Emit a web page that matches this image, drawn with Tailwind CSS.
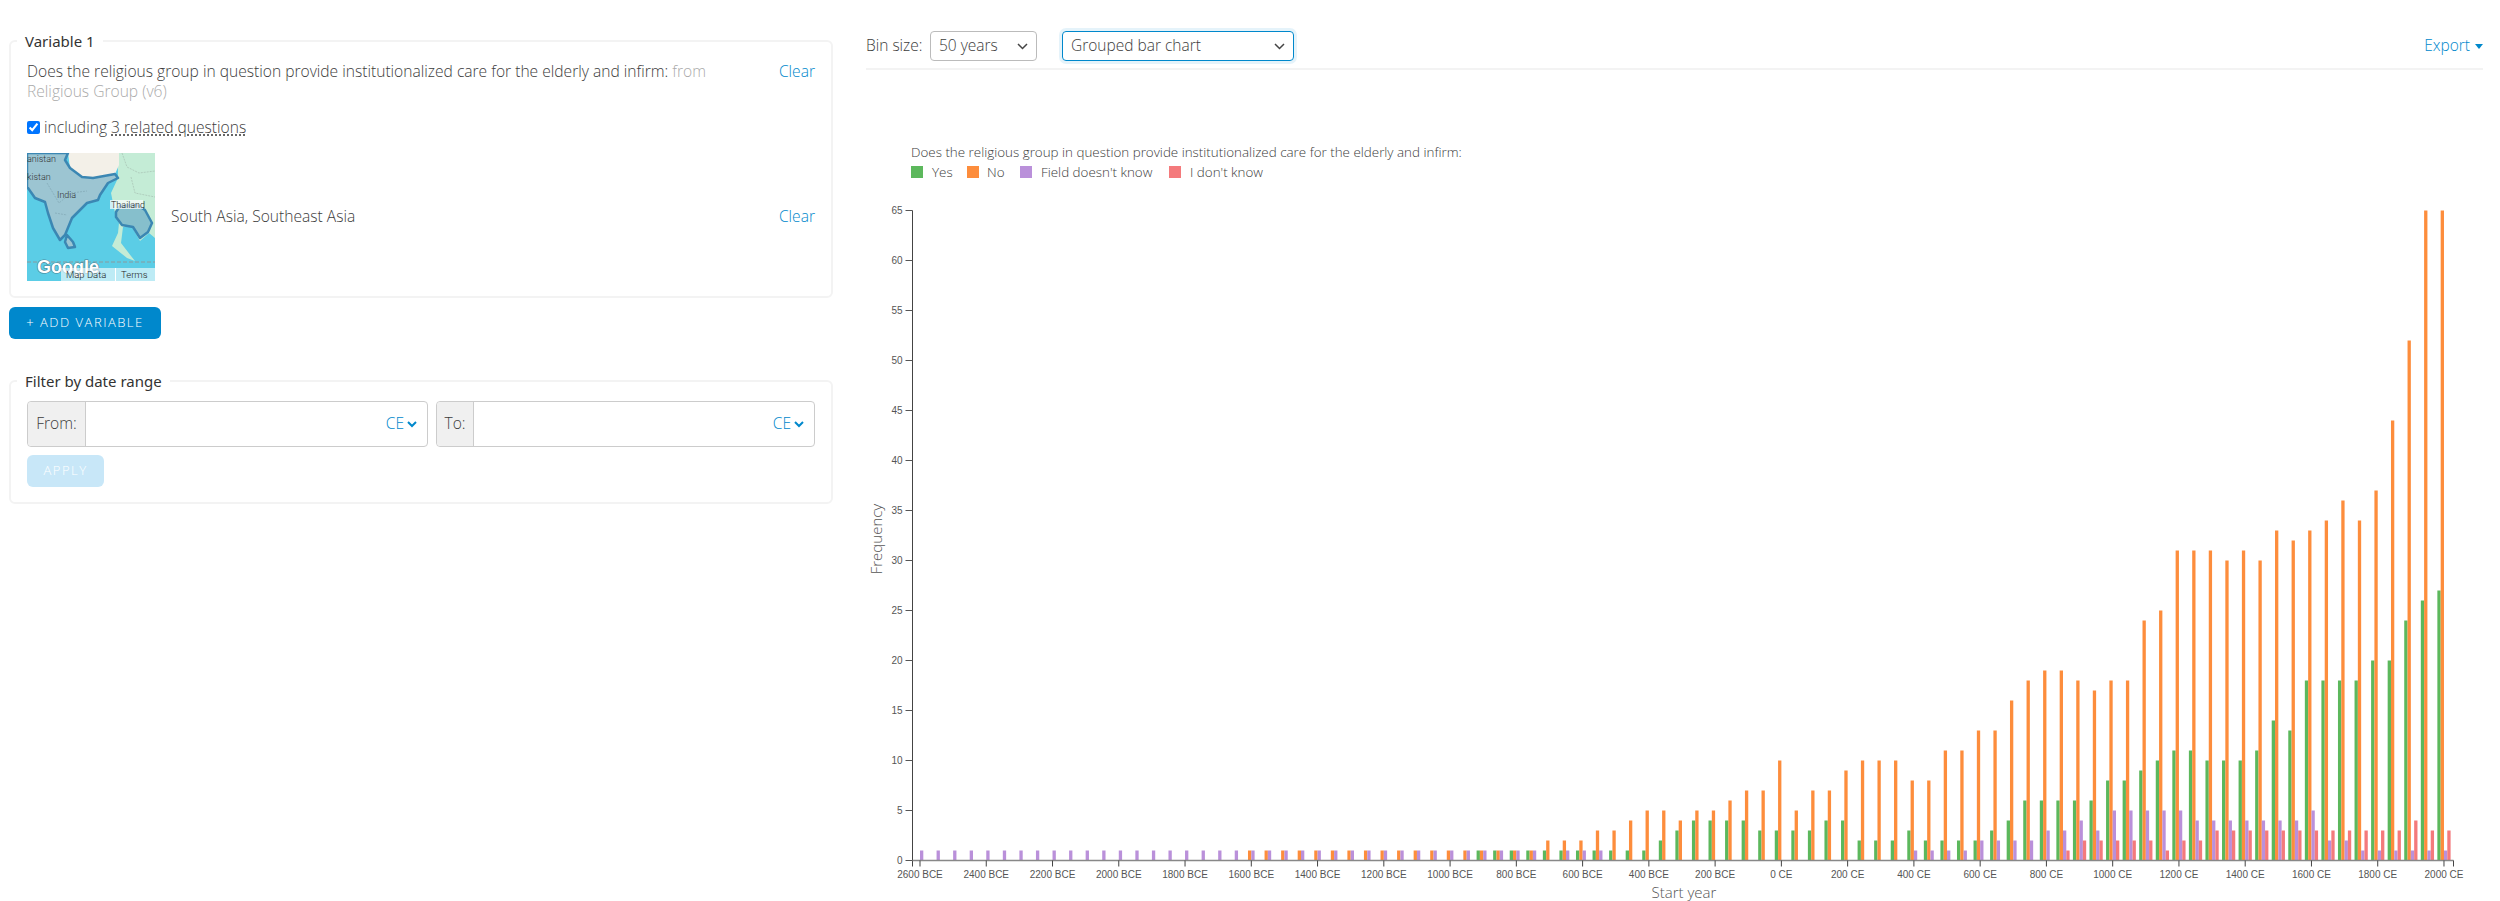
<!DOCTYPE html>
<html lang="en">
<head>
    <meta charset="UTF-8">
    <title>Religious Group chart</title>
    <script src="https://cdn.jsdelivr.net/npm/@tailwindcss/browser@4"></script>
</head>
<body class="bg-white font-['Open_Sans',sans-serif] font-light text-[#3c3c3c] overflow-hidden">
<div class="flex h-[901px]">

    <!-- Left column: variables and date filter -->
    <div class="w-[824px] ml-[9px] shrink-0 pt-[31px]">
        <fieldset class="border-2 border-[#f3f3f3] rounded-md px-[16px] h-[267px]">
            <legend class="-ml-[10px] px-2 font-['Noto_Sans',sans-serif] text-[15px] font-normal leading-5 text-[#333]">Variable 1</legend>
            <div class="flex justify-between pt-[10px] text-[15.6px] leading-5">
                <p class="w-[720px]">Does the religious group in question provide institutionalized care for the elderly and infirm: <span class="text-[#aaa]">from Religious Group (v6)</span></p>
                <a class="text-[#0088cc]">Clear</a>
            </div>
            <label class="flex items-center gap-[4px] mt-[16px] text-[15.6px] leading-5">
                <input type="checkbox" checked class="w-[13px] h-[13px] m-0">
                <span>including <span class="underline decoration-dotted underline-offset-2">3 related questions</span></span>
            </label>
            <div class="flex items-center justify-between mt-[16px] text-[15.6px]">
                <div class="flex items-center gap-4">
                    <svg width="128" height="128" viewBox="0 0 128 128" class="block" font-family="Roboto, sans-serif">
                        <rect width="128" height="128" fill="#5bcde6"/>
                        <!-- land -->
                        <path d="M91 25 84 40 88 60 92 70 91 80 85 93 100 105 108 108 104 103 94 90 96 74 104 72 113 88 122 80 128 85V0H91Z" fill="#c4ecd6"/>
                        <path d="M41 0 43 15 55 24 66 25 88 21 92 12 92 0Z" fill="#f3f0e8"/>
                        <path d="M95 0 100 14 112 20 128 18M104 24 108 40 128 44" fill="none" stroke="#8f9f98" stroke-width=".4" stroke-dasharray="2 1"/>
                        <!-- selected regions -->
                        <path d="M41 0 38 7 43 15 55 24 66 25 88 21 91 25 81 30 73 42 71 47 60 50 53 57 45 65 38 82 33 87 26 75 21 60 18 49 8 45 1 35H0V0Z" fill="#9cc5d2" stroke="#3b87b3" stroke-width="2.5" stroke-linejoin="round"/>
                        <path d="M40 82 46 89 48 94 41 95 38 89Z" fill="#9cc5d2" stroke="#3b87b3" stroke-width="2.5" stroke-linejoin="round"/>
                        <path d="M89 59 93 53 110 52 118 57 125 70 121 79 113 85 106 74 95 72 89 64Z" fill="#86bfcc" stroke="#3b87b3" stroke-width="2.5" stroke-linejoin="round"/>
                        <path d="M20 30 32 50 44 40 60 38M28 60 40 62" fill="none" stroke="#6d8f9c" stroke-width=".4" stroke-dasharray="2 1"/>
                        <path d="M0 109H128" stroke="#8a9a9e" stroke-width="1" stroke-dasharray="4 2"/>
                        <text x="30" y="45" font-size="9" fill="#333">India</text>
                        <text x="0" y="27" font-size="9" fill="#333">kistan</text>
                        <text x="0" y="9" font-size="9" fill="#333">anistan</text>
                        <rect x="83" y="47" width="33" height="9" fill="#fff" fill-opacity=".7"/>
                        <text x="84" y="55" font-size="9" fill="#111">Thailand</text>
                        <text x="10" y="120" font-size="18" font-weight="700" fill="#fff" stroke="#4a7f90" stroke-width="1.2" paint-order="stroke" font-family="Liberation Sans, sans-serif">Google</text>
                        <rect x="34" y="115" width="94" height="13" fill="#fff" fill-opacity=".6"/>
                        <path d="M88.5 115V128" stroke="#fff"/>
                        <text x="39" y="125" font-size="9.5" fill="#222">Map Data</text>
                        <text x="94" y="125" font-size="9.5" fill="#222">Terms</text>
                    </svg>
                    <span>South Asia, Southeast Asia</span>
                </div>
                <a class="text-[#0088cc]">Clear</a>
            </div>
        </fieldset>

        <button class="block mt-[9px] w-[152px] h-[32px] rounded-md bg-[#0088cc] text-white text-[13px] tracking-[1.5px]">+ ADD VARIABLE</button>

        <fieldset class="mt-[32px] border-2 border-[#f3f3f3] rounded-md px-[16px] h-[133px]">
            <legend class="-ml-[10px] px-2 font-['Noto_Sans',sans-serif] text-[15px] font-normal leading-5 text-[#333]">Filter by date range</legend>
            <div class="flex gap-[8px] mt-[10px] text-[15.6px]">
                <div class="flex w-[401px] h-[46px] border border-[#ccc] rounded">
                    <span class="flex items-center justify-center w-[58px] bg-[#f0f0f0] border-r border-[#ccc] rounded-l">From:</span>
                    <div class="flex-1 flex items-center justify-end gap-[3px] pr-[10px] text-[#0088cc]">CE
                        <svg width="10" height="7" viewBox="0 0 10 7" fill="none" stroke="#0088cc" stroke-width="2"><path d="M1 1l4 4 4-4"/></svg>
                    </div>
                </div>
                <div class="flex flex-1 h-[46px] border border-[#ccc] rounded">
                    <span class="flex items-center justify-center w-[37px] bg-[#f0f0f0] border-r border-[#ccc] rounded-l">To:</span>
                    <div class="flex-1 flex items-center justify-end gap-[3px] pr-[10px] text-[#0088cc]">CE
                        <svg width="10" height="7" viewBox="0 0 10 7" fill="none" stroke="#0088cc" stroke-width="2"><path d="M1 1l4 4 4-4"/></svg>
                    </div>
                </div>
            </div>
            <button class="block mt-[8px] w-[77px] h-[32px] rounded-md bg-[#c8e7f8] text-white text-[13px] tracking-[1.5px]">APPLY</button>
        </fieldset>
    </div>

    <!-- Right column: chart -->
    <div class="w-[1617px] ml-[33px] shrink-0">
        <div class="flex items-center h-[70px] pt-[24px] border-b-2 border-[#f3f3f3] text-[15.5px]">
            <span class="w-[64px]">Bin size:</span>
            <div class="flex items-center justify-between w-[107px] h-[30px] px-2 border border-[#bbb] rounded">
                <span>50 years</span>
                <svg width="11" height="7" viewBox="0 0 11 7" fill="none" stroke="#444" stroke-width="1.5"><path d="M1 1l4.5 4.5L10 1"/></svg>
            </div>
            <div class="flex items-center justify-between w-[232px] h-[30px] ml-[25px] px-2 border border-[#0088cc] rounded ring-[3px] ring-[#0088cc]/10">
                <span>Grouped bar chart</span>
                <svg width="11" height="7" viewBox="0 0 11 7" fill="none" stroke="#444" stroke-width="1.5"><path d="M1 1l4.5 4.5L10 1"/></svg>
            </div>
            <div class="ml-auto flex items-center gap-[5px] text-[#0088cc]">
                <span>Export</span>
                <svg width="8" height="5" viewBox="0 0 8 5" fill="#0088cc"><path d="M0 0H8L4 5Z"/></svg>
            </div>
        </div>

        <div class="ml-[45px] mt-[72px] text-[13.4px] leading-5">
            <div class="h-[20px]">Does the religious group in question provide institutionalized care for the elderly and infirm:</div>
            <div class="flex items-center h-[20px]">
                <div class="flex items-center gap-[9px] w-[56px]"><span class="w-3 h-3 bg-[#5cb85c]"></span><span>Yes</span></div>
                <div class="flex items-center gap-2 w-[53px]"><span class="w-3 h-3 bg-[#fd8d3c]"></span><span>No</span></div>
                <div class="flex items-center gap-[9px] w-[149px]"><span class="w-3 h-3 bg-[#ba90da]"></span><span>Field doesn't know</span></div>
                <div class="flex items-center gap-[9px]"><span class="w-3 h-3 bg-[#f47a7c]"></span><span>I don't know</span></div>
            </div>
        </div>

        <!-- svg starts at page y 190, x 866 -->
        <svg id="chart" width="1617" height="711" class="block mt-[8px]" font-family="Liberation Sans, sans-serif" font-size="10"></svg>
    </div>
</div>

<script>
    const svg = document.getElementById("chart");
    const originX = 866, originY = 190;
    const base = 670.5;
    const first = 920 - originX, step = 16.565, barW = 3.31;

    const lead = n => Array(38).fill(0).map((_, i) => (i >= n ? 1 : 0));
    // values per 50 year bin, 2600 BCE to 2000 CE; lead() covers 2600-750 BCE
    const yes = lead(34).concat([1,1,1,1,1,1,1,2,3,4,4,4,4,3,3,3,3,4,4,2,2,2,3,2,2,2,2,3,4,6,6,6,6,6,8,8,9,10,11,11,10,10,10,11,14,13,18,18,18,18,20,20,24,26,27]);
    const no = lead(20).concat([2,2,2,3,3,4,5,5,4,5,5,6,7,7,10,5,7,7,9,10,10,10,8,8,11,11,13,13,16,18,19,19,18,17,18,18,24,25,31,31,31,30,31,30,33,32,33,34,36,34,37,44,52,65,65]);
    const field = lead(0).concat([0,1,1,1,0,0,0,0,0,0,0,0,0,0,0,0,0,0,0,0,0,0,1,1,1,1,2,2,2,2,3,3,4,3,5,5,5,5,5,4,4,4,4,4,4,4,5,2,2,1,1,1,1,1,1]);
    const idk = Array(38).fill(0).concat([0,0,0,0,0,0,0,0,0,0,0,0,0,0,0,0,0,0,0,0,0,0,0,0,0,0,0,0,0,0,0,1,2,2,2,2,2,1,2,2,3,3,3,3,3,3,3,3,3,3,3,3,4,3,3]);
    const series = [[yes, "#5cb85c"], [no, "#fd8d3c"], [field, "#ba90da"], [idk, "#f47a7c"]];

    let out = "";
    series.forEach(([vals, colour], k) => {
        vals.forEach((v, i) => {
            if (!v) return;
            const x = first + i * step - 2 * barW + k * barW;
            out += `<rect x="${x}" y="${base - v * 10}" width="${barW}" height="${v * 10}" fill="${colour}"/>`;
        });
    });

    // y axis
    const axisX = 46.5;
    out += `<path d="M${axisX} ${base - 650}V${base + 6}" stroke="#444"/>`;
    for (let v = 0; v <= 65; v += 5) {
        const y = base - v * 10;
        out += `<path d="M${axisX - 7} ${y}H${axisX}" stroke="#555"/>`;
        out += `<text x="${axisX - 10}" y="${y + 3.5}" text-anchor="end" fill="#555">${v}</text>`;
    }

    // x axis
    const endX = 2453.5 - originX;
    out += `<path d="M${axisX} ${base}H${endX}" stroke="#888" stroke-width="1.6"/>`;
    out += `<path d="M${endX} ${base}v6" stroke="#444"/>`;
    for (let t = -2600; t <= 2000; t += 200) {
        const x = first + (t + 2600) / 50 * step;
        const label = t < 0 ? (-t) + " BCE" : t + " CE";
        out += `<path d="M${x} ${base}v6" stroke="#444"/>`;
        out += `<text x="${x}" y="${base + 17}" text-anchor="middle" fill="#555">${label}</text>`;
    }

    // axis titles
    out += `<text x="818" y="708" text-anchor="middle" fill="#555" font-family="Open Sans, sans-serif" font-weight="300" font-size="15">Start year</text>`;
    out += `<text transform="translate(16 349) rotate(-90)" text-anchor="middle" fill="#555" font-family="Open Sans, sans-serif" font-weight="300" font-size="15">Frequency</text>`;

    svg.innerHTML = out;
</script>
</body>
</html>
